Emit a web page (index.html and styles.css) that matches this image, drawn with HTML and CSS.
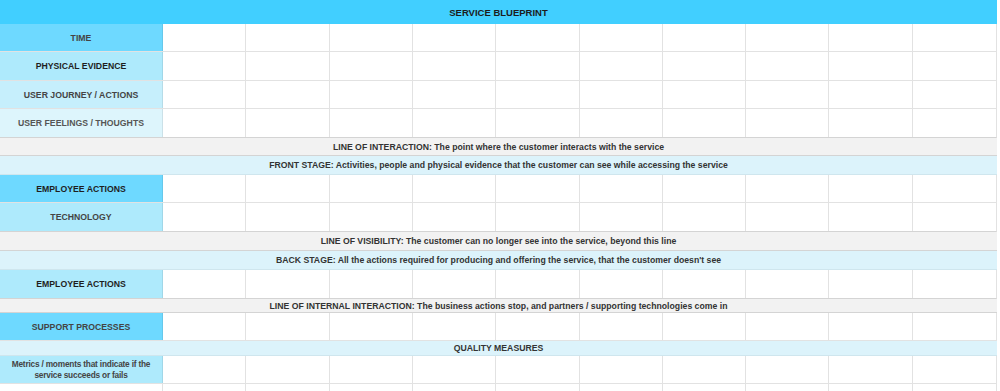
FILE: index.html
```html
<!DOCTYPE html>
<html>
<head>
<meta charset="utf-8">
<link rel="stylesheet" href="styles.css">
</head>
<body>
<div class="sheet">
  <div class="row title h24"><div class="band-text dark">SERVICE BLUEPRINT</div></div>

  <div class="row h28"><div class="label c-strong t-mid">TIME</div><div class="cell"></div><div class="cell"></div><div class="cell"></div><div class="cell"></div><div class="cell"></div><div class="cell"></div><div class="cell"></div><div class="cell"></div><div class="cell"></div><div class="cell"></div></div>
  <div class="row h29"><div class="label c-mid t-dark">PHYSICAL EVIDENCE</div><div class="cell"></div><div class="cell"></div><div class="cell"></div><div class="cell"></div><div class="cell"></div><div class="cell"></div><div class="cell"></div><div class="cell"></div><div class="cell"></div><div class="cell"></div></div>
  <div class="row h28"><div class="label c-soft t-mid">USER JOURNEY / ACTIONS</div><div class="cell"></div><div class="cell"></div><div class="cell"></div><div class="cell"></div><div class="cell"></div><div class="cell"></div><div class="cell"></div><div class="cell"></div><div class="cell"></div><div class="cell"></div></div>
  <div class="row h29 before-band"><div class="label c-pale t-light">USER FEELINGS / THOUGHTS</div><div class="cell"></div><div class="cell"></div><div class="cell"></div><div class="cell"></div><div class="cell"></div><div class="cell"></div><div class="cell"></div><div class="cell"></div><div class="cell"></div><div class="cell"></div></div>

  <div class="row band gray h18"><div class="band-text">LINE OF INTERACTION: The point where the customer interacts with the service</div></div>
  <div class="row band blue h19"><div class="band-text">FRONT STAGE: Activities, people and physical evidence that the customer can see while accessing the service</div></div>

  <div class="row h28"><div class="label c-strong t-dark">EMPLOYEE ACTIONS</div><div class="cell"></div><div class="cell"></div><div class="cell"></div><div class="cell"></div><div class="cell"></div><div class="cell"></div><div class="cell"></div><div class="cell"></div><div class="cell"></div><div class="cell"></div></div>
  <div class="row h29 before-band"><div class="label c-mid t-mid">TECHNOLOGY</div><div class="cell"></div><div class="cell"></div><div class="cell"></div><div class="cell"></div><div class="cell"></div><div class="cell"></div><div class="cell"></div><div class="cell"></div><div class="cell"></div><div class="cell"></div></div>

  <div class="row band gray h19"><div class="band-text">LINE OF VISIBILITY: The customer can no longer see into the service, beyond this line</div></div>
  <div class="row band blue h19"><div class="band-text">BACK STAGE: All the actions required for producing and offering the service, that the customer doesn't see</div></div>

  <div class="row h29 before-band"><div class="label c-mid t-dark">EMPLOYEE ACTIONS</div><div class="cell"></div><div class="cell"></div><div class="cell"></div><div class="cell"></div><div class="cell"></div><div class="cell"></div><div class="cell"></div><div class="cell"></div><div class="cell"></div><div class="cell"></div></div>

  <div class="row band gray h14"><div class="band-text">LINE OF INTERNAL INTERACTION: The business actions stop, and partners / supporting technologies come in</div></div>

  <div class="row h28"><div class="label c-strong t-mid">SUPPORT PROCESSES</div><div class="cell"></div><div class="cell"></div><div class="cell"></div><div class="cell"></div><div class="cell"></div><div class="cell"></div><div class="cell"></div><div class="cell"></div><div class="cell"></div><div class="cell"></div></div>

  <div class="row band blue h15"><div class="band-text">QUALITY MEASURES</div></div>

  <div class="row h28"><div class="label c-mid t-mid wrap">Metrics / moments that indicate if the service succeeds or fails</div><div class="cell"></div><div class="cell"></div><div class="cell"></div><div class="cell"></div><div class="cell"></div><div class="cell"></div><div class="cell"></div><div class="cell"></div><div class="cell"></div><div class="cell"></div></div>
  <div class="row h7 last"><div class="label c-none"></div><div class="cell"></div><div class="cell"></div><div class="cell"></div><div class="cell"></div><div class="cell"></div><div class="cell"></div><div class="cell"></div><div class="cell"></div><div class="cell"></div><div class="cell"></div></div>
</div>
</body>
</html>
```

FILE: styles.css
```css
html, body {
  margin: 0;
  padding: 0;
  background: #ffffff;
}

body {
  font-family: "Liberation Sans", Arial, sans-serif;
  font-size: 8.7px;
  font-weight: bold;
  color: #333333;
  overflow: hidden;
}

.sheet {
  width: 997px;
  display: flex;
  flex-direction: column;
}

.row {
  display: grid;
  grid-template-columns: 163px repeat(10, 1fr);
  box-sizing: border-box;
  border-bottom: 1px solid #e2e2e2;
  border-right: 1px solid #e2e2e2;
}

.row.before-band {
  border-bottom-color: #d4d4d4;
}

.row.last {
  border-bottom: none;
}

.h7 { height: 7px; }
.h14 { height: 14px; }
.h15 { height: 15px; }
.h18 { height: 18px; }
.h19 { height: 19px; }
.h24 { height: 24px; }
.h28 { height: 28px; }
.h29 { height: 29px; }

.title {
  display: flex;
  background: #41cfff;
  border: none;
}

.band {
  display: flex;
  border-bottom-color: #d4d4d4;
  border-right: none;
}

.band.gray { background: #f2f2f2; }
.band.blue { background: #dcf3fb; border-bottom-color: #cfe6ee; }

.band-text {
  flex: 1;
  display: flex;
  align-items: center;
  justify-content: center;
  white-space: nowrap;
  color: #333333;
}

.band-text.dark {
  color: #1c1c1c;
  font-size: 9.5px;
}

.label {
  display: flex;
  align-items: center;
  justify-content: center;
  text-align: center;
  border-right: 1px solid rgba(0, 0, 0, 0.08);
}

.label.wrap {
  font-size: 8.3px;
  line-height: 11px;
  padding: 0;
  letter-spacing: -0.2px;
}

.c-strong { background: #6ed9ff; }
.c-mid { background: #aeeafc; }
.c-soft { background: #c6effc; }
.c-pale { background: #ddf5fc; }
.c-none { background: #ffffff; border-right-color: #e2e2e2; }

.t-dark { color: #1e1e1e; }
.t-mid { color: #444444; }
.t-light { color: #555555; }

.cell {
  border-right: 1px solid #e2e2e2;
}

.cell:last-child {
  border-right: none;
}
```
